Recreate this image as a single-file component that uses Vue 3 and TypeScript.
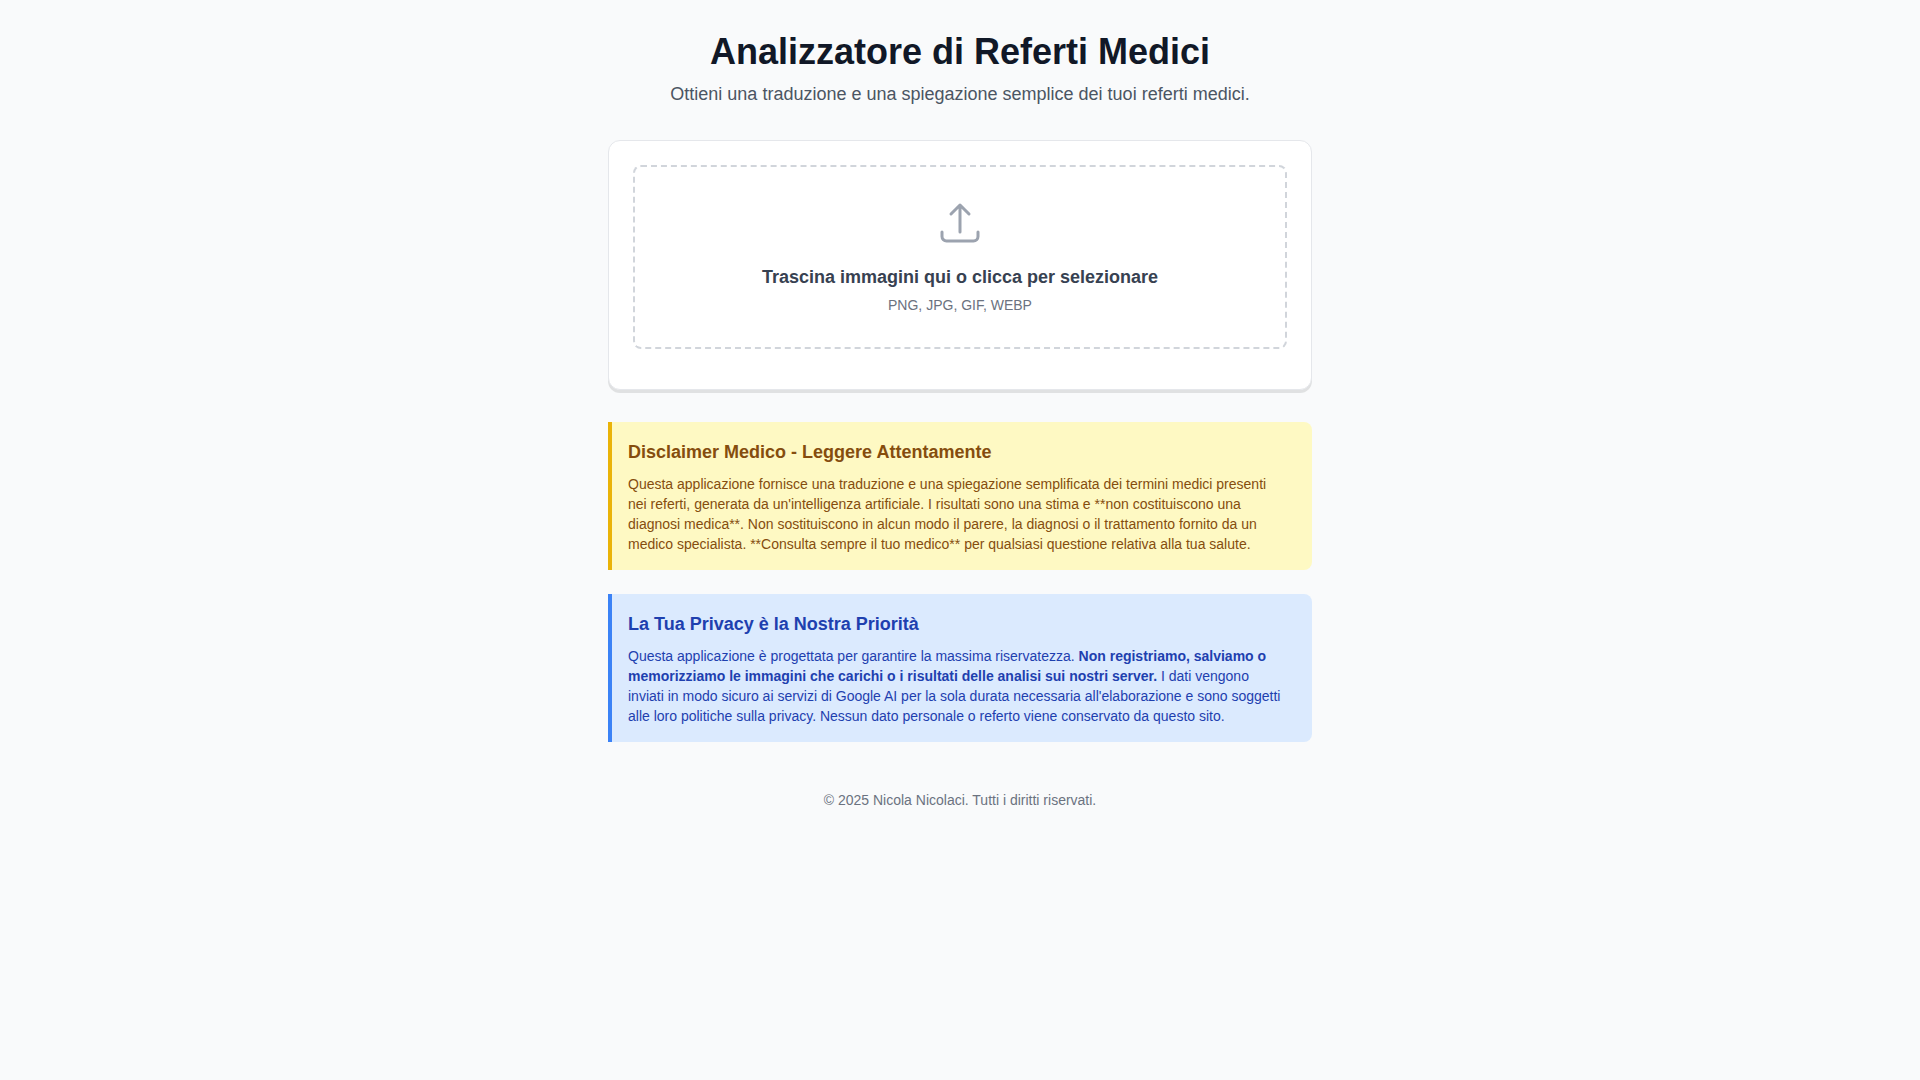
<script setup lang="ts">
import { ref } from 'vue'

const files = ref<File[]>([])

function onSelect(event: Event): void {
  const input = event.target as HTMLInputElement
  files.value = Array.from(input.files ?? [])
}

function onDrop(event: DragEvent): void {
  files.value = Array.from(event.dataTransfer?.files ?? [])
}
</script>

<template>
  <div class="page">
    <header class="header">
      <h1 class="title">Analizzatore di Referti Medici</h1>
      <p class="subtitle">Ottieni una traduzione e una spiegazione semplice dei tuoi referti medici.</p>
    </header>

    <main class="main">
      <section class="card">
        <label class="dropzone" for="report-images" @dragover.prevent @drop.prevent="onDrop">
          <input
            id="report-images"
            class="file-input"
            type="file"
            accept="image/png,image/jpeg,image/gif,image/webp"
            multiple
            @change="onSelect"
          />
          <svg class="upload-icon" viewBox="0 0 24 24" fill="none" stroke="currentColor" aria-hidden="true">
            <path
              stroke-width="1.5"
              stroke-linecap="round"
              stroke-linejoin="round"
              d="M3 16.5v2.25A2.25 2.25 0 0 0 5.25 21h13.5A2.25 2.25 0 0 0 21 18.75V16.5m-13.5-9L12 3m0 0l4.5 4.5M12 3v13.5"
            />
          </svg>
          <span class="drop-title">Trascina immagini qui o clicca per selezionare</span>
          <span class="drop-hint">PNG, JPG, GIF, WEBP</span>
        </label>
      </section>

      <div class="notices">
        <section class="notice warning">
          <h2 class="notice-title">Disclaimer Medico - Leggere Attentamente</h2>
          <p class="notice-text">
            Questa applicazione fornisce una traduzione e una spiegazione semplificata dei termini medici presenti
            nei referti, generata da un'intelligenza artificiale. I risultati sono una stima e **non costituiscono una
            diagnosi medica**. Non sostituiscono in alcun modo il parere, la diagnosi o il trattamento fornito da un
            medico specialista. **Consulta sempre il tuo medico** per qualsiasi questione relativa alla tua salute.
          </p>
        </section>

        <section class="notice privacy">
          <h2 class="notice-title">La Tua Privacy è la Nostra Priorità</h2>
          <p class="notice-text">
            Questa applicazione è progettata per garantire la massima riservatezza.
            <strong>Non registriamo, salviamo o memorizziamo le immagini che carichi o i risultati delle analisi sui
            nostri server.</strong>
            I dati vengono inviati in modo sicuro ai servizi di Google AI per la sola durata necessaria
            all'elaborazione e sono soggetti alle loro politiche sulla privacy. Nessun dato personale o referto viene
            conservato da questo sito.
          </p>
        </section>
      </div>
    </main>

    <footer class="footer">© 2025 Nicola Nicolaci. Tutti i diritti riservati.</footer>
  </div>
</template>

<style>
body {
  background: #f9fafb;
}
</style>

<style scoped>
.page {
  box-sizing: border-box;
  max-width: 768px;
  margin: 0 auto;
  padding: 32px;
  font-family: "Liberation Sans", Arial, sans-serif;
  color: #111827;
}

.header {
  margin-bottom: 32px;
  text-align: center;
}

.title {
  margin: 0;
  font-size: 36px;
  line-height: 40px;
  font-weight: 700;
}

.subtitle {
  margin: 8px 0 0;
  font-size: 18px;
  line-height: 28px;
  color: #4b5563;
}

.card {
  padding: 24px 24px 40px;
  border: 1px solid #e5e7eb;
  border-radius: 12px;
  background: #fff;
  box-shadow: 0 3px 0 #e0e1e2;
}

.dropzone {
  display: flex;
  flex-direction: column;
  align-items: center;
  position: relative;
  padding: 32px;
  border: 2px dashed #d1d5db;
  border-radius: 8px;
  text-align: center;
  cursor: pointer;
}

.dropzone:focus-within {
  border-color: #3b82f6;
}

.file-input {
  position: absolute;
  width: 1px;
  height: 1px;
  margin: 0;
  opacity: 0;
}

.upload-icon {
  width: 48px;
  height: 48px;
  color: #9ca3af;
}

.drop-title {
  margin-top: 16px;
  font-size: 18px;
  line-height: 28px;
  font-weight: 600;
  color: #374151;
}

.drop-hint {
  margin-top: 4px;
  font-size: 14px;
  line-height: 20px;
  color: #6b7280;
}

.notices {
  display: flex;
  flex-direction: column;
  gap: 24px;
  margin-top: 32px;
}

.notice {
  padding: 16px 28px 16px 16px;
  border-left: 4px solid;
  border-radius: 0 8px 8px 0;
}

.warning {
  border-color: #eab308;
  background: #fef9c3;
  color: #854d0e;
}

.privacy {
  border-color: #3b82f6;
  background: #dbeafe;
  color: #1e40af;
}

.notice-title {
  margin: 0;
  font-size: 18px;
  line-height: 28px;
  font-weight: 700;
}

.notice-text {
  margin: 8px 0 0;
  font-size: 14px;
  line-height: 20px;
}

.footer {
  margin-top: 48px;
  font-size: 14px;
  line-height: 20px;
  text-align: center;
  color: #6b7280;
}
</style>
